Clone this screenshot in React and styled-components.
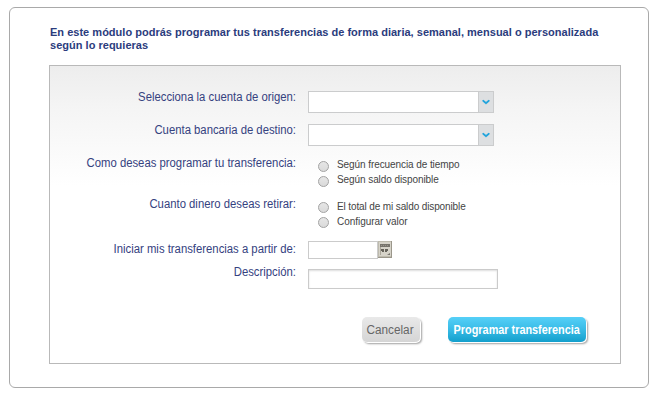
import React from "react";
import styled, { createGlobalStyle } from "styled-components";

const GlobalStyle = createGlobalStyle`
  * { box-sizing: border-box; }
  body { margin: 0; background: #fff; font-family: "Liberation Sans", Arial, sans-serif; }
`;

const Frame = styled.main`
  width: 640px;
  height: 381px;
  margin: 7px 0 0 9px;
  padding: 18px 27px 0 40px;
  border: 1px solid #a9a9a9;
  border-radius: 6px;
`;

const Title = styled.h1`
  margin: 0;
  height: 39px;
  font-size: 11px;
  line-height: 13px;
  font-weight: 700;
  letter-spacing: 0.018px;
  color: #2b3c7d;
  white-space: nowrap;
`;

const Panel = styled.form`
  width: 572px;
  height: 299px;
  margin-left: -1px;
  padding-top: 23px;
  border: 1px solid #b9b9b9;
  background: linear-gradient(#ededed 0, #f5f5f5 45px, #fff 120px);
`;

const Row = styled.div`
  display: flex;
  align-items: flex-start;
  height: ${(p) => p.$height}px;
`;

const Label = styled.label`
  width: 246px;
  margin-right: 12px;
  padding-top: ${(p) => p.$top ?? 1}px;
  text-align: right;
  font-size: 12px;
  line-height: 14px;
  color: #35427f;
  white-space: nowrap;
  transform: scaleX(0.943);
  transform-origin: right center;
`;

const Control = styled.div`
  display: flex;
  padding-top: ${(p) => p.$top || 0}px;
`;

const Select = styled.div`
  display: flex;
  width: 186px;
  height: 22px;
  border: 1px solid #cbcccd;
  background: #fff;
`;

const SelectArrow = styled.span`
  display: flex;
  align-items: center;
  justify-content: center;
  width: 15px;
  margin-left: auto;
  border-left: 1px solid #cbcccd;
  background: #dddfe1;
`;

const Options = styled.div`
  display: flex;
  flex-direction: column;
  padding: 4px 0 0 10px;
`;

const Option = styled.label`
  display: flex;
  align-items: flex-start;
  height: 15px;
  font-size: 10px;
  line-height: 12px;
  letter-spacing: ${(p) => p.$spacing ?? -0.08}px;
  color: #444;
  white-space: nowrap;
`;

const Radio = styled.span`
  width: 11px;
  height: 11px;
  margin: ${(p) => p.$top ?? 2}px 8px 0 0;
  border: 1px solid #a2a2a2;
  border-radius: 50%;
  background: linear-gradient(#e6e6e6, #dadada);
`;

const Input = styled.input`
  width: ${(p) => p.$width}px;
  height: ${(p) => p.$height}px;
  padding: 0 4px;
  border: 1px solid #cbcbcb;
  border-radius: 0;
  outline: 0;
  background: #fff;
  box-shadow: ${(p) => (p.$inset ? "inset 0 1px 2px #ddd" : "none")};
`;

const Actions = styled.div`
  display: flex;
  gap: 28px;
  padding: 21px 0 0 312px;
`;

const Button = styled.button`
  display: flex;
  align-items: center;
  justify-content: center;
  width: ${(p) => p.$width}px;
  height: 25px;
  padding: 0 1px 0 0;
  border: 0;
  border-radius: 5px;
  font: ${(p) => (p.$primary ? 700 : 400)} 12px "Liberation Sans", Arial, sans-serif;
  white-space: nowrap;
  color: ${(p) => (p.$primary ? "#fff" : "#666")};
  background: ${(p) =>
    p.$primary ? "linear-gradient(#56d0f8, #38bbe6 50%, #139fcc)" : "linear-gradient(#e9e9e9, #d5d5d5)"};
  box-shadow: 1px 1px 0 #fff, 2px 2px 2px #a0a0a0;
`;

const ButtonText = styled.span`
  flex: none;
  transform: scaleX(${(p) => p.$stretch});
`;

const Chevron = () => (
  <svg width="8" height="6" viewBox="0 0 8 6">
    <path d="M.7 1.2C1.7 2.6 3 3.2 4 4.1C5 3.2 6.3 2.6 7.3 1.2" fill="none" stroke="#22a4dc" strokeWidth="1.9" />
  </svg>
);

const CalendarIcon = () => (
  <svg width="14" height="17" viewBox="0 0 14 17">
    <path d="M0 0h14v17H0z" fill="#bebbae" />
    <path d="M1 1h12v14H1z" fill="#d6d3c9" />
    <path d="M2 3h10v3H2z" fill="#77746c" />
    <path d="M3 4h1v1H3zM5 4h1v1H5zM7 4h1v1H7zM9 4h1v1H9z" fill="#99958b" />
    <path d="M3 8h3v2H3zM4 10h2v1H4zM7 8h3v2H7zM7 10h2v1H7z" fill="#66635b" />
    <path d="M2 6h1v8H2z" fill="#aaa69a" />
    <path d="M9 14h3v-2z" fill="#77746c" />
    <path d="M0 16h14v1H0zM13 0h1v17h-1z" fill="#9b978b" />
  </svg>
);

const SelectBox = () => (
  <Select role="combobox" aria-expanded="false" tabIndex={0}>
    <SelectArrow><Chevron /></SelectArrow>
  </Select>
);

export default function App() {
  return (
    <>
      <GlobalStyle />
      <Frame>
        <Title>
          En este módulo podrás programar tus transferencias de forma diaria, semanal, mensual o personalizada
          <br />
          según lo requieras
        </Title>
        <Panel onSubmit={(e) => e.preventDefault()}>
          <Row $height={33}>
            <Label>Selecciona la cuenta de origen:</Label>
            <Control $top={2}><SelectBox /></Control>
          </Row>
          <Row $height={33}>
            <Label>Cuenta bancaria de destino:</Label>
            <Control $top={2}><SelectBox /></Control>
          </Row>
          <Row $height={42}>
            <Label>Como deseas programar tu transferencia:</Label>
            <Options>
              <Option><Radio />Según frecuencia de tiempo</Option>
              <Option><Radio />Según saldo disponible</Option>
            </Options>
          </Row>
          <Row $height={44}>
            <Label $top={0}>Cuanto dinero deseas retirar:</Label>
            <Options>
              <Option $spacing={-0.12}><Radio $top={1} />El total de mi saldo disponible</Option>
              <Option $spacing={-0.04}><Radio $top={1} />Configurar valor</Option>
            </Options>
          </Row>
          <Row $height={23}>
            <Label>Iniciar mis transferencias a partir de:</Label>
            <Control><Input $width={70} $height={18} aria-label="Fecha" /><CalendarIcon /></Control>
          </Row>
          <Row $height={32}>
            <Label>Descripción:</Label>
            <Control $top={5}><Input $width={190} $height={20} $inset aria-label="Descripción" /></Control>
          </Row>
          <Actions>
            <Button type="button" $width={58}><ButtonText $stretch={0.98}>Cancelar</ButtonText></Button>
            <Button type="submit" $width={138} $primary>
              <ButtonText $stretch={0.905}>Programar transferencia</ButtonText>
            </Button>
          </Actions>
        </Panel>
      </Frame>
    </>
  );
}
